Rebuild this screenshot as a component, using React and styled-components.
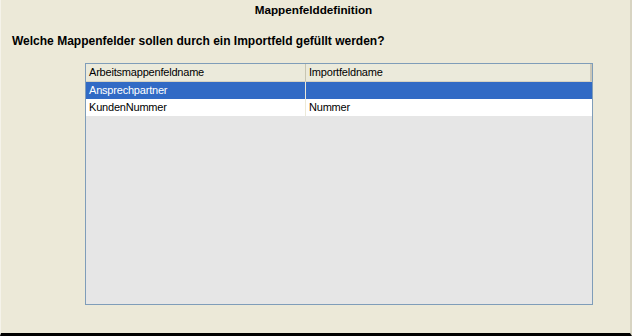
import React from 'react'
import styled, { createGlobalStyle } from 'styled-components'

const GlobalStyle = createGlobalStyle`
  html, body {
    margin: 0;
    padding: 0;
    background: #ece9d8;
  }
  body {
    font-family: Tahoma, "Liberation Sans", Arial, sans-serif;
    font-size: 11px;
    color: #000;
  }
`

const rows = [
  { name: 'Ansprechpartner', field: '', selected: true },
  { name: 'KundenNummer', field: 'Nummer' },
]

const App = () => {
  return (
    <Window>
      <GlobalStyle />
      <Title>Mappenfelddefinition</Title>
      <Question>Welche Mappenfelder sollen durch ein Importfeld gefüllt werden?</Question>
      <ListBox>
        <Header>
          <HeaderCell>Arbeitsmappenfeldname</HeaderCell>
          <HeaderCell>Importfeldname</HeaderCell>
        </Header>
        {rows.map((r) => (
          <Row key={r.name} $selected={r.selected}>
            <Cell>{r.name}</Cell>
            <Cell>{r.field}</Cell>
          </Row>
        ))}
      </ListBox>
    </Window>
  )
}

export default App

const Window = styled.div`
  width: 632px;
  height: 336px;
  box-sizing: border-box;
  background: #ece9d8;
  border-left: 1px solid #f5f3ea;
  border-right: 2px solid #d8d4c2;
  border-bottom: 3px solid #000;
  display: flex;
  flex-direction: column;
  overflow: hidden;
`
const Title = styled.div`
  height: 19px;
  line-height: 19px;
  text-align: center;
  font-weight: bold;
  font-size: 11.7px;
  padding-right: 4px;
`
const Question = styled.div`
  margin-top: 15px;
  padding-left: 11px;
  line-height: 14px;
  font-weight: bold;
  font-size: 12px;
`
const ListBox = styled.div`
  margin: 15px 0 0 84px;
  width: 508px;
  height: 242px;
  box-sizing: border-box;
  border: 1px solid #7f9db9;
  background: #e6e6e6;
  display: flex;
  flex-direction: column;
`
const Header = styled.div`
  display: grid;
  grid-template-columns: 219px 1fr;
  height: 18px;
  box-sizing: border-box;
  background: #ebeadb;
  border-bottom: 1px solid #d6d2c2;
  border-right: 2px solid #cbc7b8;
`
const HeaderCell = styled.div`
  line-height: 17px;
  padding-left: 3px;
  white-space: nowrap;
  letter-spacing: -0.2px;
  & + & {
    border-left: 1px solid #c7c5b2;
  }
`
const Row = styled.div`
  display: grid;
  grid-template-columns: 219px 1fr;
  height: 17px;
  background: ${(p) => (p.$selected ? '#316ac5' : '#fff')};
  color: ${(p) => (p.$selected ? '#fff' : '#000')};
`
const Cell = styled.div`
  line-height: 16px;
  padding-left: 3px;
  white-space: nowrap;
  letter-spacing: -0.2px;
  & + & {
    border-left: 1px solid #ece9d8;
  }
`
